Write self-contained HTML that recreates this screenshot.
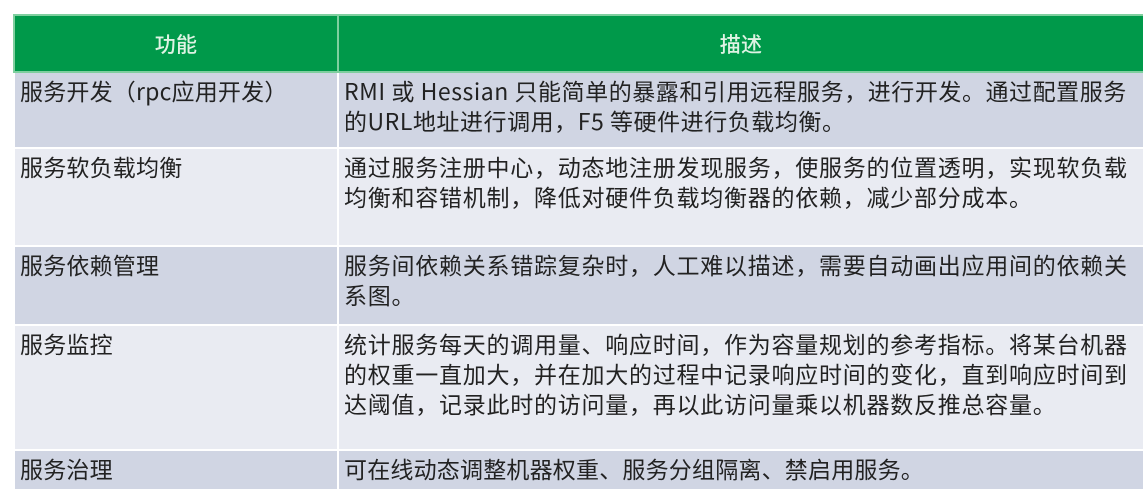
<!DOCTYPE html>
<html><head><meta charset="utf-8"><style>
body{margin:0;background:#fff;width:1143px;height:500px;overflow:hidden;font-family:"Noto Sans CJK SC","Liberation Sans",sans-serif;}
table{position:absolute;left:13px;top:14px;width:1132px;border-collapse:collapse;table-layout:fixed;}
td,th{border:2px solid #fff;vertical-align:top;font-size:23px;line-height:30px;color:#222;padding:2px 3px 0 5px;font-weight:normal;letter-spacing:0.2px;white-space:nowrap;overflow:hidden;}
td.c{letter-spacing:0.75px}
td.a{letter-spacing:0.55px}
th{background:#00994a;color:#dff3e4;height:55px;vertical-align:middle;text-align:center;padding:0;border-color:#7fcf9f;font-weight:500;font-size:21px;}
tr.o td{background:#d0d5e3}
tr.e td{background:#e9ebf2}
</style></head><body>
<table>
<colgroup><col style="width:324px"><col></colgroup>
<tr><th>功能</th><th>描述</th></tr>
<tr class="o" style="height:76px"><td>服务开发（rpc应用开发）</td><td class="a">RMI 或 Hessian 只能简单的暴露和引用远程服务，进行开发。通过配置服务<br>的URL地址进行调用，F5 等硬件进行负载均衡。</td></tr>
<tr class="e" style="height:98px"><td>服务软负载均衡</td><td class="c">通过服务注册中心，动态地注册发现服务，使服务的位置透明，实现软负载<br>均衡和容错机制，降低对硬件负载均衡器的依赖，减少部分成本。</td></tr>
<tr class="o" style="height:79px"><td>服务依赖管理</td><td class="c">服务间依赖关系错踪复杂时，人工难以描述，需要自动画出应用间的依赖关<br>系图。</td></tr>
<tr class="e" style="height:125px"><td>服务监控</td><td class="c">统计服务每天的调用量、响应时间，作为容量规划的参考指标。将某台机器<br>的权重一直加大，并在加大的过程中记录响应时间的变化，直到响应时间到<br>达阈值，记录此时的访问量，再以此访问量乘以机器数反推总容量。</td></tr>
<tr class="o" style="height:40px"><td>服务治理</td><td>可在线动态调整机器权重、服务分组隔离、禁启用服务。</td></tr>
</table>
</body></html>
